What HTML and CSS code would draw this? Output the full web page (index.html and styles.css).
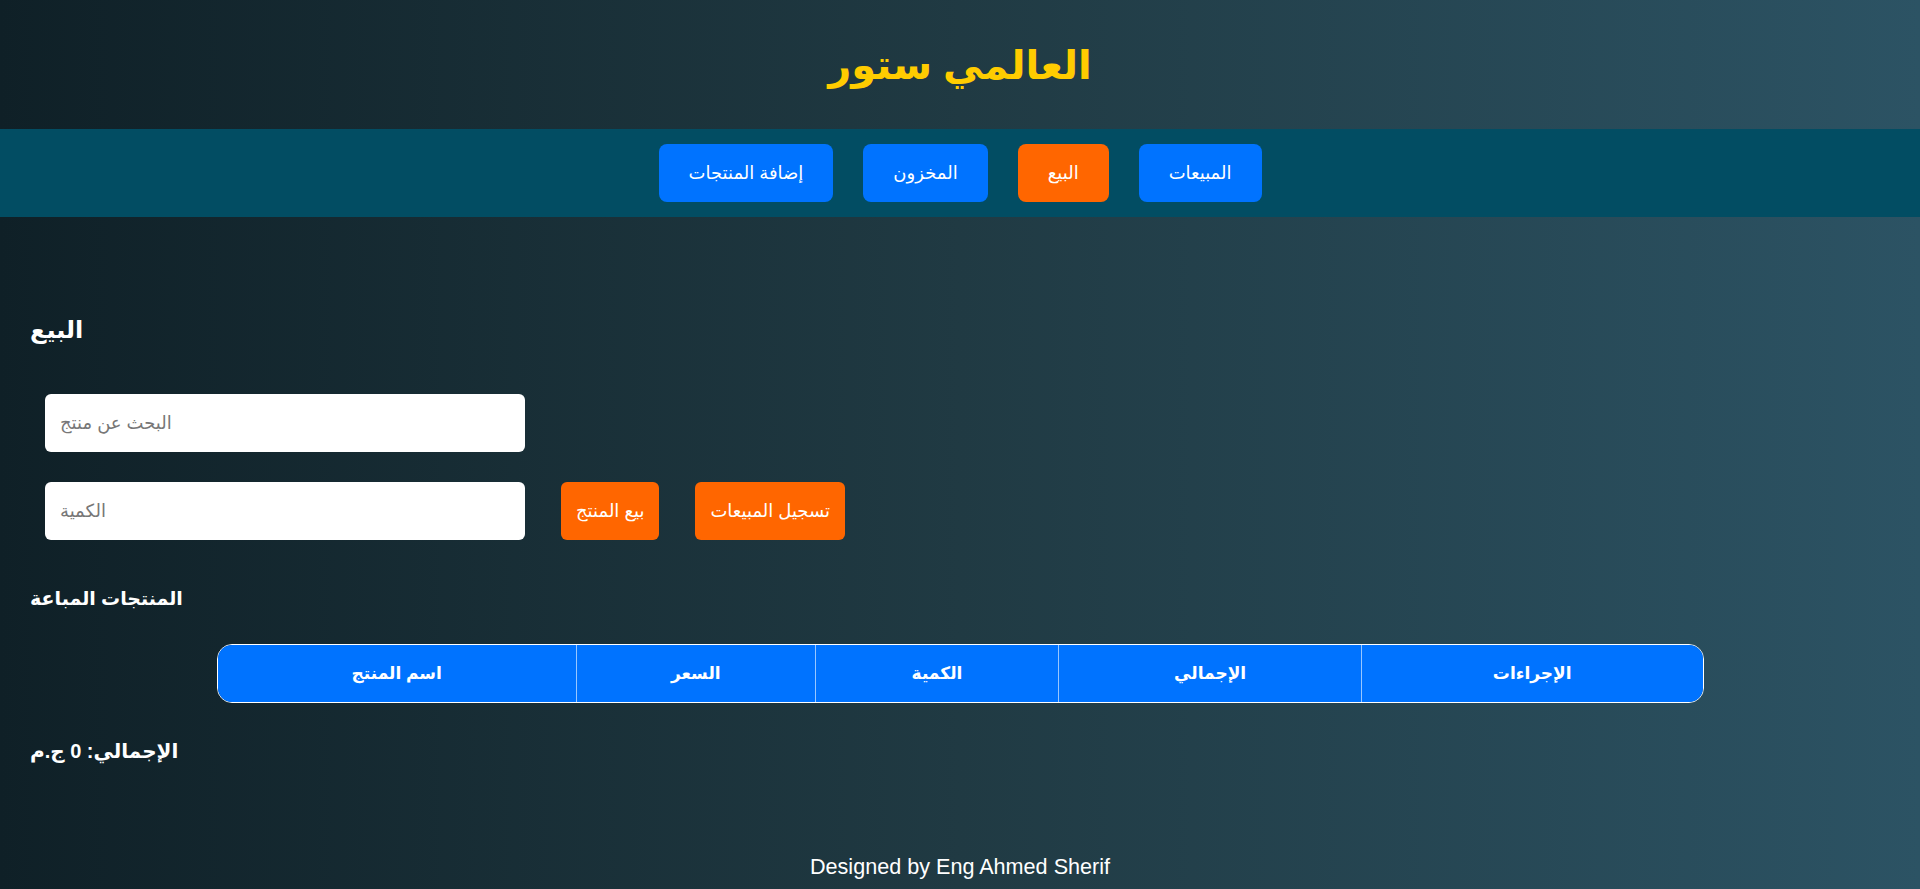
FILE: index.html
```html
<!DOCTYPE html>
<html lang="ar">
<head>
<meta charset="utf-8">
<title>العالمي ستور</title>
<link rel="stylesheet" href="styles.css">
</head>
<body>
<header class="site-header">
  <h1 class="site-title">العالمي ستور</h1>
</header>
<nav class="main-nav" dir="rtl">
  <button class="nav-btn">المبيعات</button>
  <button class="nav-btn nav-btn-active">البيع</button>
  <button class="nav-btn">المخزون</button>
  <button class="nav-btn">إضافة المنتجات</button>
</nav>
<main class="content">
  <h2 class="section-title">البيع</h2>
  <div class="form-row form-row-first">
    <input class="text-input" type="text" placeholder="البحث عن منتج">
  </div>
  <div class="form-row">
    <input class="text-input" type="number" placeholder="الكمية">
    <button class="action-btn">بيع المنتج</button>
    <button class="action-btn">تسجيل المبيعات</button>
  </div>
  <h3 class="sub-title">المنتجات المباعة</h3>
  <table class="sales-table">
    <thead>
      <tr>
        <th class="col-name">اسم المنتج</th>
        <th class="col-price">السعر</th>
        <th class="col-qty">الكمية</th>
        <th class="col-total">الإجمالي</th>
        <th class="col-actions">الإجراءات</th>
      </tr>
    </thead>
    <tbody></tbody>
  </table>
  <h3 class="total">الإجمالي: 0 ج.م</h3>
</main>
<footer class="site-footer">Designed by Eng Ahmed Sherif</footer>
</body>
</html>
```

FILE: styles.css
```css
* { box-sizing: border-box; }

html, body {
  margin: 0;
  padding: 0;
}

body {
  min-height: 889px;
  background: linear-gradient(to right, #0f2027, #203a43, #2c5364);
  color: #fff;
  font-family: Arial, "Liberation Sans", "DejaVu Sans", sans-serif;
}

.site-header {
  height: 129px;
  display: flex;
  align-items: center;
  justify-content: center;
}

.site-title {
  margin: 0;
  color: #ffcc00;
  font-size: 40px;
  font-weight: bold;
}

.main-nav {
  background: #024d63;
  height: 88px;
  display: flex;
  justify-content: center;
  align-items: center;
  gap: 30px;
}

.nav-btn {
  height: 58px;
  padding: 0 30px;
  border: none;
  border-radius: 8px;
  background: #0073ff;
  color: #fff;
  font-family: inherit;
  font-size: 18px;
}

.nav-btn-active {
  background: #ff6600;
}

.content {
  padding: 0 30px;
}

.section-title {
  margin: 95px 0 0;
  font-size: 24px;
  line-height: 36px;
}

.form-row {
  display: flex;
  align-items: center;
  gap: 36px;
  padding-left: 15px;
  margin-top: 30px;
}

.form-row-first {
  margin-top: 46px;
}

.text-input {
  width: 480px;
  height: 58px;
  padding: 0 15px;
  border: none;
  border-radius: 6px;
  background: #fff;
  font-family: inherit;
  font-size: 18px;
  color: #333;
}

.text-input::placeholder {
  color: #777;
}

.action-btn {
  height: 58px;
  padding: 0 15px;
  border: none;
  border-radius: 6px;
  background: #ff6600;
  color: #fff;
  font-family: inherit;
  font-size: 18px;
}

.sub-title {
  margin: 44px 0 0;
  font-size: 19px;
  line-height: 30px;
}

.sales-table {
  width: 1487px;
  margin: 30px auto 0;
  border-collapse: separate;
  border-spacing: 0;
  border: 1px solid #fff;
  border-radius: 15px;
  overflow: hidden;
}

.sales-table th {
  height: 57px;
  background: #0073ff;
  color: #fff;
  font-size: 17px;
  font-weight: bold;
  text-align: center;
  border-left: 1px solid rgba(255, 255, 255, 0.6);
  padding: 0;
}

.sales-table th:first-child {
  border-left: none;
}

.col-name { width: 359px; }
.col-price { width: 239px; }
.col-qty { width: 244px; }
.col-total { width: 303px; }
.col-actions { width: 342px; }

.total {
  margin: 33px 0 0;
  font-size: 20px;
  line-height: 30px;
}

.site-footer {
  margin-top: 88px;
  text-align: center;
  font-size: 21.6px;
  line-height: 26px;
}
```
